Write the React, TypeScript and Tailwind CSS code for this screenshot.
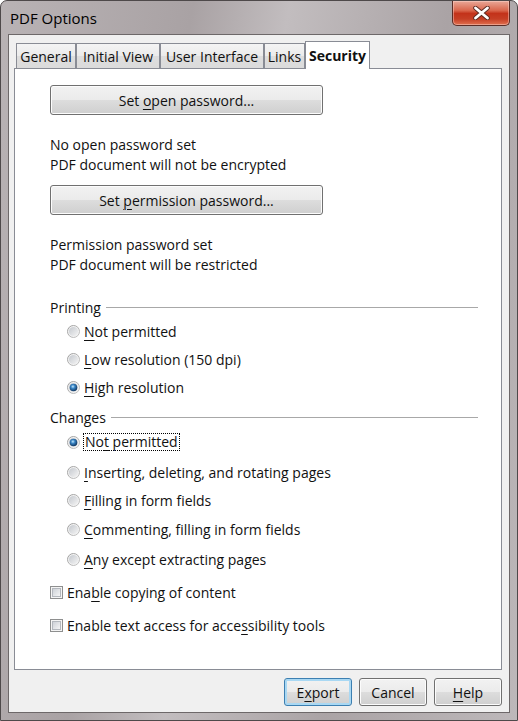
import type { ReactNode } from 'react';

const U = ({ children }: { children: ReactNode }) => (
  <span className="underline decoration-1 underline-offset-[3px]">{children}</span>
);

const Radio = ({ checked }: { checked?: boolean }) => (
  <svg width="13" height="13" viewBox="0 0 13 13" className="shrink-0">
    <defs>
      <linearGradient id="rIn" x1="0" y1="0" x2="1" y2="1">
        <stop offset="0" stopColor="#c4c8ce" />
        <stop offset="1" stopColor="#f4f4f4" />
      </linearGradient>
      <linearGradient id="rRing" x1="0" y1="0" x2="1" y2="1">
        <stop offset="0" stopColor="#9a9a9a" />
        <stop offset="1" stopColor="#c8c8c8" />
      </linearGradient>
      <radialGradient id="rDot" cx="0.42" cy="0.38" r="0.62">
        <stop offset="0" stopColor="#c4e8fc" />
        <stop offset="0.4" stopColor="#3a86c6" />
        <stop offset="1" stopColor="#0f355f" />
      </radialGradient>
    </defs>
    <circle cx="6.5" cy="6.5" r="6" fill="#f2f2f2" stroke="url(#rRing)" strokeWidth="1" />
    <circle cx="6.5" cy="6.5" r="4.6" fill="url(#rIn)" />
    {checked && <circle cx="6.5" cy="6.5" r="3.8" fill="url(#rDot)" />}
  </svg>
);

const Check = () => (
  <svg width="13" height="13" viewBox="0 0 13 13" className="shrink-0">
    <defs>
      <linearGradient id="cIn" x1="0" y1="0" x2="1" y2="1">
        <stop offset="0" stopColor="#cbcfd5" />
        <stop offset="1" stopColor="#f7f7f7" />
      </linearGradient>
    </defs>
    <rect x="0.5" y="0.5" width="12" height="12" fill="#f4f4f4" stroke="#8e8f8f" />
    <rect x="2.5" y="2.5" width="8" height="8" fill="url(#cIn)" stroke="#b4b8be" />
  </svg>
);

const btn =
  "flex items-center justify-center rounded-[3px] border border-[#707070] bg-[linear-gradient(to_bottom,#f2f2f2_0%,#ebebeb_50%,#dddddd_50%,#cfcfcf_100%)] shadow-[inset_0_0_0_1px_#fcfcfc]";

const GroupLabel = ({ label, cls }: { label: string; cls: string }) => (
  <div className={`flex items-center gap-[5px] ${cls}`}>
    <span>{label}</span>
    <div className="h-px flex-1 bg-[#a8a8a8]" />
  </div>
);

const tabs = [
  { name: 'General', w: 'w-[60px]' },
  { name: 'Initial View', w: 'w-[84px]' },
  { name: 'User Interface', w: 'w-[104px]' },
  { name: 'Links', w: 'w-[41px]' },
];

export default function App() {
  return (
    <div className="w-[518px] h-[721px] overflow-hidden bg-white font-['Open_Sans',sans-serif] text-[14px] text-[#111]">
      <div className="flex h-full flex-col rounded-t-[7px] border border-[#4e494a] bg-[linear-gradient(100deg,#b9b3b5_0%,#a9a2a4_30%,#c2bdbf_45%,#aaa3a5_70%,#bdb8ba_100%)]">
        {/* title bar */}
        <div className="flex h-[33px] items-start justify-between pl-[9px] pr-[7px]">
          <span className="mt-[6px] text-[15px] text-black">PDF Options</span>
          <div className="flex h-[25px] w-[58px] items-center justify-center rounded-b-[5px] border border-t-0 border-[#5b2d26] bg-[linear-gradient(to_bottom,#e9a898_0%,#d9654b_40%,#c3321a_52%,#c63f25_75%,#e0704f_100%)] shadow-[inset_0_0_0_1px_rgba(255,220,210,0.45)]">
            <svg width="17" height="14" viewBox="0 0 17 14">
              <path d="M2.5 2 L14.5 12 M14.5 2 L2.5 12" stroke="#5a2a22" strokeWidth="4.6" strokeLinecap="round" />
              <path d="M2.5 2 L14.5 12 M14.5 2 L2.5 12" stroke="#ffffff" strokeWidth="2.8" strokeLinecap="round" />
            </svg>
          </div>
        </div>

        {/* client area */}
        <div className="mx-[7px] mb-[7px] flex flex-1 flex-col border border-[#6d6869] bg-[#f0f0f0] pl-[5px] pr-[7px] pt-[6px]">
          <div className="flex h-[27px] items-end pl-[2px]">
            {tabs.map((t) => (
              <div
                key={t.name}
                className={`${t.w} flex h-[25px] items-center justify-center border border-b-0 border-[#898c95] bg-[linear-gradient(to_bottom,#f4f4f4_0%,#ebebeb_50%,#dedede_50%,#dbdbdb_100%)] text-[14px]`}
              >
                {t.name}
              </div>
            ))}
            <div className="relative z-10 mb-[-1px] flex h-[28px] w-[65px] items-center justify-center border border-b-0 border-[#898c95] bg-white font-bold">
              Security
            </div>
          </div>

          {/* tab panel */}
          <div className="flex h-[602px] flex-col border border-[#898c95] bg-white pl-[35px] pr-[23px] pt-[16px]">
            <button className={`${btn} h-[30px] w-[273px]`}>
              Set&nbsp;<U>o</U>pen password...
            </button>
            <div className="mt-[20px] leading-[20px]">
              <div>No open password set</div>
              <div>PDF document will not be encrypted</div>
            </div>
            <button className={`${btn} mt-[10px] h-[30px] w-[273px]`}>
              Set&nbsp;<U>p</U>ermission password...
            </button>
            <div className="mt-[20px] leading-[20px]">
              <div>Permission password set</div>
              <div>PDF document will be restricted</div>
            </div>

            <GroupLabel label="Printing" cls="mt-[22px] h-[20px]" />
            <div className="flex h-[28px] items-center gap-[4px] pl-[17px]">
              <Radio />
              <span><U>N</U>ot permitted</span>
            </div>
            <div className="flex h-[28px] items-center gap-[4px] pl-[17px]">
              <Radio />
              <span><U>L</U>ow resolution (150 dpi)</span>
            </div>
            <div className="flex h-[28px] items-center gap-[4px] pl-[17px]">
              <Radio checked />
              <span><U>H</U>igh resolution</span>
            </div>

            <GroupLabel label="Changes" cls="mt-[6px] h-[20px]" />
            <div className="flex h-[30px] items-center gap-[3px] pl-[17px]">
              <Radio checked />
              <span className="border border-dotted border-black px-[1px] leading-[16px]">
                No<U>t</U> permitted
              </span>
            </div>
            <div className="flex h-[30px] items-center gap-[4px] pl-[17px]">
              <Radio />
              <span><U>I</U>nserting, deleting, and rotating pages</span>
            </div>
            <div className="flex h-[26px] items-center gap-[4px] pl-[17px]">
              <Radio />
              <span><U>F</U>illing in form fields</span>
            </div>
            <div className="flex h-[33px] items-center gap-[4px] pl-[17px]">
              <Radio />
              <span><U>C</U>ommenting, filling in form fields</span>
            </div>
            <div className="flex h-[26px] items-center gap-[4px] pl-[17px]">
              <Radio />
              <span><U>A</U>ny except extracting pages</span>
            </div>
            <div className="flex h-[40px] items-center gap-[4px]">
              <Check />
              <span>Ena<U>b</U>le copying of content</span>
            </div>
            <div className="flex h-[26px] items-center gap-[4px]">
              <Check />
              <span>Enable text access for acce<U>s</U>sibility tools</span>
            </div>
          </div>

          {/* dialog buttons */}
          <div className="mt-[8px] flex justify-end gap-[7px]">
            <button className="flex h-[28px] w-[68px] items-center justify-center rounded-[3px] border border-[#3c7fb1] bg-[linear-gradient(to_bottom,#f2f2f2_0%,#ebebeb_50%,#dddddd_50%,#cfcfcf_100%)] shadow-[inset_0_0_0_2px_#a9d8f3]">
              E<U>x</U>port
            </button>
            <button className={`${btn} h-[28px] w-[68px]`}>Cancel</button>
            <button className={`${btn} h-[28px] w-[68px]`}>
              <U>H</U>elp
            </button>
          </div>
        </div>
      </div>
    </div>
  );
}
